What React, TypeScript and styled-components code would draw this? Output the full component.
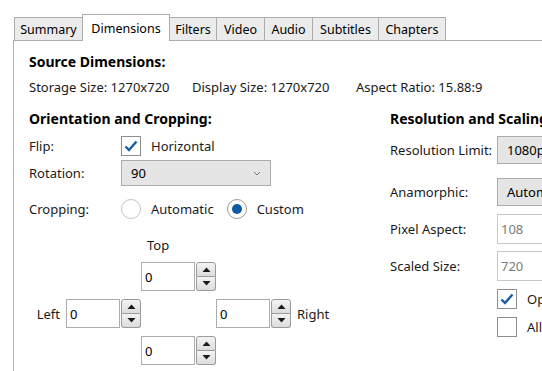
import styled, { createGlobalStyle } from 'styled-components';

const Global = createGlobalStyle`
  html, body {
    margin: 0;
    padding: 0;
    background: #ffffff;
    overflow: hidden;
  }
  body {
    font-family: "Noto Sans", "Open Sans", sans-serif;
    font-size: 13px;
    color: #1a1a1a;
  }
`;

const Window = styled.div`
  width: 542px;
  height: 371px;
  overflow: hidden;
  padding-top: 14px;
  box-sizing: border-box;
`;

const TabStrip = styled.div`
  display: flex;
  align-items: flex-end;
  height: 27px;
  padding-left: 14px;
  position: relative;
  z-index: 1;
`;

const Tab = styled.div<{ $w: number; $active?: boolean }>`
  width: ${p => p.$w}px;
  height: ${p => (p.$active ? 27 : 24)}px;
  box-sizing: border-box;
  border: 1px solid #acacac;
  border-bottom: ${p => (p.$active ? 'none' : '1px solid #acacac')};
  margin-left: -1px;
  background: ${p => (p.$active ? '#ffffff' : '#ebebeb')};
  display: flex;
  align-items: center;
  justify-content: center;
  padding-top: ${p => (p.$active ? 0 : 1)}px;
  font-size: 12.5px;
  color: #000;
  white-space: nowrap;
  &:first-child { margin-left: 0; }
`;

const Panel = styled.div`
  margin-left: 13px;
  margin-top: -1px;
  border-top: 1px solid #acacac;
  border-left: 1px solid #acacac;
  height: 340px;
  padding: 12px 0 0 15px;
  box-sizing: border-box;
`;

const Heading = styled.div`
  font-size: 14px;
  font-weight: 700;
  line-height: 18px;
  color: #000;
  white-space: nowrap;
`;

const InfoRow = styled.div`
  display: flex;
  margin-top: 7px;
  line-height: 18px;
  white-space: nowrap;
`;

const Info = styled.span<{ $w?: number }>`
  width: ${p => (p.$w ? `${p.$w}px` : 'auto')};
`;

const Columns = styled.div`
  display: flex;
  margin-top: 14px;
`;

const Column = styled.div<{ $w?: number }>`
  display: flex;
  flex-direction: column;
  width: ${p => (p.$w ? `${p.$w}px` : 'auto')};
  flex-shrink: 0;
`;

const Row = styled.div<{ $h: number; $mt: number; $label: number }>`
  display: grid;
  grid-template-columns: ${p => p.$label}px auto;
  align-items: center;
  height: ${p => p.$h}px;
  margin-top: ${p => p.$mt}px;
  white-space: nowrap;
`;

const Label = styled.span`
  color: #1a1a1a;
`;

const Inline = styled.div`
  display: flex;
  align-items: center;
  gap: 10px;
`;

const Box = styled.span`
  width: 20px;
  height: 20px;
  box-sizing: border-box;
  border: 1px solid #8e8e8e;
  background: #fff;
  display: inline-flex;
  align-items: center;
  justify-content: center;
`;

const Radio = styled.span<{ $on?: boolean }>`
  width: 20px;
  height: 20px;
  box-sizing: border-box;
  border-radius: 50%;
  border: 1px solid ${p => (p.$on ? '#9a9a9a' : '#c4c4c4')};
  background: #fff;
  display: inline-flex;
  align-items: center;
  justify-content: center;
  &::after {
    content: '';
    display: ${p => (p.$on ? 'block' : 'none')};
    width: 10px;
    height: 10px;
    border-radius: 50%;
    background: #0a5aa5;
  }
`;

const RadioGroup = styled.div`
  display: flex;
  align-items: center;
  gap: 13px;
`;

const Select = styled.div<{ $w: number; $h: number }>`
  width: ${p => p.$w}px;
  height: ${p => p.$h}px;
  box-sizing: border-box;
  border: 1px solid #acacac;
  background: #e5e5e5;
  display: flex;
  align-items: center;
  justify-content: space-between;
  padding: 0 9px 0 9px;
  color: #000;
`;

const TextInput = styled.div<{ $w: number; $h: number; $disabled?: boolean }>`
  width: ${p => p.$w}px;
  height: ${p => p.$h}px;
  box-sizing: border-box;
  border: 1px solid #c8c8c8;
  background: #fff;
  display: flex;
  align-items: center;
  padding-left: 3px;
  color: ${p => (p.$disabled ? '#7a7a7a' : '#000')};
`;

const CropGrid = styled.div`
  display: grid;
  grid-template-columns: 37px 75px 75px 75px auto;
  grid-template-rows: 18px 29px 29px 29px;
  row-gap: 8px;
  margin-top: 14px;
  align-items: center;
`;

const CropLabel = styled.span<{ $col: number; $row: number; $align?: string }>`
  grid-column: ${p => p.$col};
  grid-row: ${p => p.$row};
  justify-self: ${p => p.$align ?? 'start'};
  padding: 0 6px;
`;

const Spin = styled.div<{ $col: number; $row: number }>`
  grid-column: ${p => p.$col};
  grid-row: ${p => p.$row};
  display: flex;
  height: 29px;
`;

const SpinInput = styled.div`
  width: 55px;
  height: 29px;
  box-sizing: border-box;
  border: 1px solid #acacac;
  background: #fff;
  display: flex;
  align-items: center;
  padding-left: 3px;
  color: #000;
`;

const SpinButtons = styled.div`
  display: flex;
  flex-direction: column;
  width: 20px;
  margin-left: 1px;
`;

const SpinButton = styled.div<{ $up?: boolean }>`
  height: ${p => (p.$up ? 15 : 14)}px;
  box-sizing: border-box;
  border: 1px solid #9a9a9a;
  border-radius: ${p => (p.$up ? '3px 3px 0 0' : '0 0 3px 3px')};
  border-top: ${p => (p.$up ? '1px solid #9a9a9a' : 'none')};
  background: linear-gradient(#f4f4f4, #dcdcdc);
  display: flex;
  align-items: center;
  justify-content: center;
`;

const Check = () => (
  <svg width="14" height="12" viewBox="0 0 14 12">
    <path d="M1.5 6.5 L5 10 L12.5 1.5" fill="none" stroke="#1b5ea6" strokeWidth="2.4" />
  </svg>
);

const Chevron = () => (
  <svg width="8" height="5" viewBox="0 0 8 5">
    <path d="M1 1 L4 4 L7 1" fill="none" stroke="#777" strokeWidth="1" />
  </svg>
);

const Triangle = ({ up }: { up?: boolean }) => (
  <svg width="9" height="5" viewBox="0 0 9 5">
    <path d={up ? 'M0.5 5 L4.5 0.5 L8.5 5 Z' : 'M0.5 0 L4.5 4.5 L8.5 0 Z'} fill="#1a1a1a" />
  </svg>
);

const SpinBox = ({ col, row }: { col: number; row: number }) => (
  <Spin $col={col} $row={row}>
    <SpinInput>0</SpinInput>
    <SpinButtons>
      <SpinButton $up><Triangle up /></SpinButton>
      <SpinButton><Triangle /></SpinButton>
    </SpinButtons>
  </Spin>
);

const tabs = [
  { name: 'Summary', w: 69 },
  { name: 'Dimensions', w: 88, active: true },
  { name: 'Filters', w: 48 },
  { name: 'Video', w: 49 },
  { name: 'Audio', w: 49 },
  { name: 'Subtitles', w: 67 },
  { name: 'Chapters', w: 68 },
];

const App = () => (
  <Window>
    <Global />
    <TabStrip>
      {tabs.map(t => (
        <Tab key={t.name} $w={t.w} $active={t.active}>{t.name}</Tab>
      ))}
    </TabStrip>
    <Panel>
      <Heading>Source Dimensions:</Heading>
      <InfoRow>
        <Info $w={163}>Storage Size: 1270x720</Info>
        <Info $w={164}>Display Size: 1270x720</Info>
        <Info>Aspect Ratio: 15.88:9</Info>
      </InfoRow>
      <Columns>
        <Column $w={361}>
          <Heading>Orientation and Cropping:</Heading>
          <Row $h={20} $mt={8} $label={92}>
            <Label>Flip:</Label>
            <Inline>
              <Box><Check /></Box>
              <span>Horizontal</span>
            </Inline>
          </Row>
          <Row $h={26} $mt={4} $label={92}>
            <Label>Rotation:</Label>
            <Select $w={150} $h={26}>
              <span>90</span>
              <Chevron />
            </Select>
          </Row>
          <Row $h={26} $mt={10} $label={92}>
            <Label>Cropping:</Label>
            <RadioGroup>
              <Inline><Radio /><span>Automatic</span></Inline>
              <Inline><Radio $on /><span>Custom</span></Inline>
            </RadioGroup>
          </Row>
          <CropGrid>
            <CropLabel $col={3} $row={1} $align="start">Top</CropLabel>
            <SpinBox col={3} row={2} />
            <CropLabel $col={1} $row={3} $align="end">Left</CropLabel>
            <SpinBox col={2} row={3} />
            <SpinBox col={4} row={3} />
            <CropLabel $col={5} $row={3}>Right</CropLabel>
            <SpinBox col={3} row={4} />
          </CropGrid>
        </Column>
        <Column>
          <Heading>Resolution and Scaling:</Heading>
          <Row $h={28} $mt={8} $label={107}>
            <Label>Resolution Limit:</Label>
            <Select $w={120} $h={28}><span>1080p</span><Chevron /></Select>
          </Row>
          <Row $h={28} $mt={14} $label={107}>
            <Label>Anamorphic:</Label>
            <Select $w={120} $h={28}><span>Automatic</span><Chevron /></Select>
          </Row>
          <Row $h={30} $mt={8} $label={107}>
            <Label>Pixel Aspect:</Label>
            <TextInput $w={60} $h={30} $disabled>108</TextInput>
          </Row>
          <Row $h={30} $mt={7} $label={107}>
            <Label>Scaled Size:</Label>
            <TextInput $w={60} $h={30} $disabled>720</TextInput>
          </Row>
          <Row $h={20} $mt={8} $label={107}>
            <span />
            <Inline><Box><Check /></Box><span>Optimal size</span></Inline>
          </Row>
          <Row $h={20} $mt={8} $label={107}>
            <span />
            <Inline><Box /><span>Allow upscaling</span></Inline>
          </Row>
        </Column>
      </Columns>
    </Panel>
  </Window>
);

export default App;
